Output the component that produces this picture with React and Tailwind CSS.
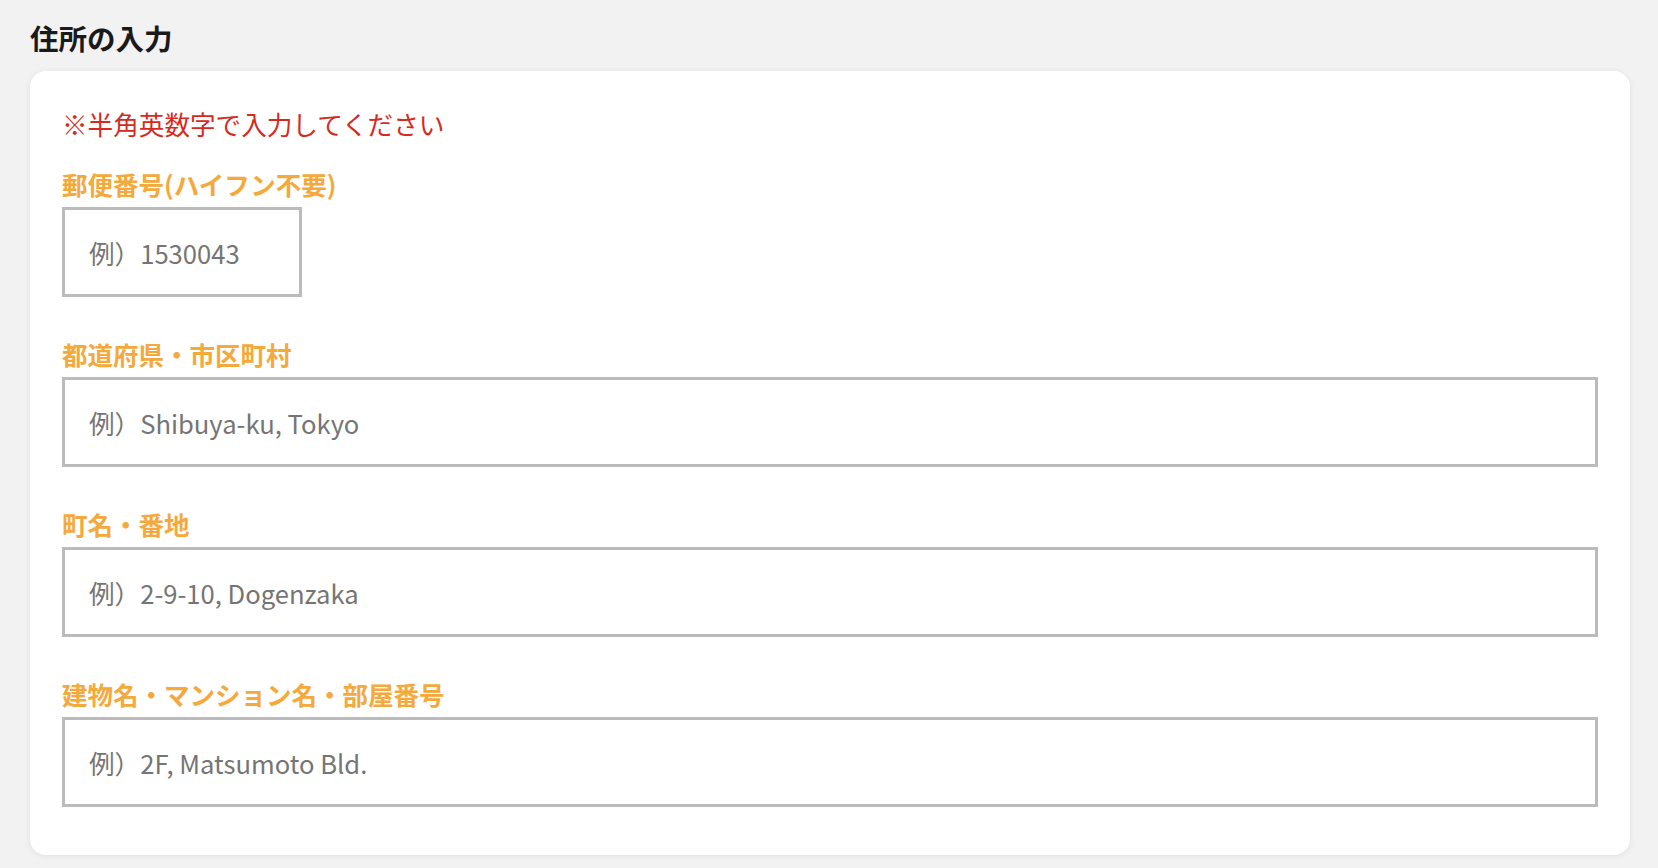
import React from 'react';

const fields = [
  { label: '郵便番号(ハイフン不要)', placeholder: '例）1530043', short: true },
  { label: '都道府県・市区町村', placeholder: '例）Shibuya-ku, Tokyo' },
  { label: '町名・番地', placeholder: '例）2-9-10, Dogenzaka' },
  { label: '建物名・マンション名・部屋番号', placeholder: '例）2F, Matsumoto Bld.' },
];

const AddressForm = () => {
  return (
    <div
      className="min-h-screen bg-[#f2f2f2] pl-[30px] pr-[28px] pt-[18px] pb-[14px]"
      style={{ fontFamily: '"Noto Sans CJK JP", "Noto Sans", sans-serif' }}
    >
      <h2 className="text-[28.5px] leading-[40px] font-bold text-[#1a1a1a] mb-[13px]">住所の入力</h2>
      <div className="bg-white rounded-[16px] shadow-[0_1px_6px_rgba(0,0,0,0.08)] px-[32px] pt-[33px] pb-[48px]">
        <p className="text-[25.6px] leading-[40px] text-[#d62a20] mb-[22px]">※半角英数字で入力してください</p>
        <div className="flex flex-col gap-[39px]">
          {fields.map((f) => (
            <div key={f.label} className="flex flex-col">
              <label className="text-[25.5px] leading-[36px] font-bold text-[#f4a93c] mb-[5px]">{f.label}</label>
              <input
                type="text"
                placeholder={f.placeholder}
                className={`h-[90px] border-[3px] border-[#bbbbbb] bg-white px-[24px] text-[25.6px] text-[#333] placeholder:text-[#757575] outline-none ${
                  f.short ? 'w-[240px]' : 'w-full'
                }`}
              />
            </div>
          ))}
        </div>
      </div>
    </div>
  );
};

export default function App() {
  return <AddressForm />;
}
